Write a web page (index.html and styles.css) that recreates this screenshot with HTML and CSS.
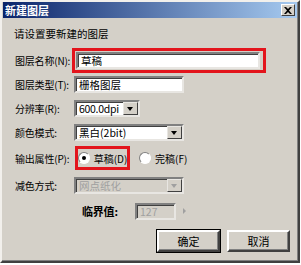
FILE: index.html
```html
<!DOCTYPE html>
<html lang="zh">
<head>
  <meta charset="UTF-8">
  <title>新建图层</title>
  <link rel="stylesheet" href="styles.css">
</head>
<body>
  <div class="window">
    <div class="titlebar">
      <span class="title">新建图层</span>
      <span class="close">
        <svg width="8" height="7" viewBox="0 0 8 7"><path d="M0 0h2l2 2 2-2h2L5 3.5 8 7H6L4 5 2 7H0l3-3.5z" fill="#000"/></svg>
      </span>
    </div>
    <div class="content">
      <p class="intro">请设置要新建的图层</p>
      <div class="form">
        <label class="lbl">图层名称(N):</label>
        <div class="ctl">
          <div class="mark mark-name"><div class="field w-name">草稿</div></div>
        </div>

        <label class="lbl">图层类型(T):</label>
        <div class="ctl"><div class="field w-type">栅格图层</div></div>

        <label class="lbl">分辨率(R):</label>
        <div class="ctl">
          <div class="field combo w-res"><span>600.0dpi</span><span class="drop"></span></div>
        </div>

        <label class="lbl">颜色模式:</label>
        <div class="ctl">
          <div class="field combo w-mode"><span>黑白(2bit)</span><span class="drop"></span></div>
        </div>

        <label class="lbl">输出属性(P):</label>
        <div class="ctl radios">
          <div class="mark mark-radio">
            <span class="radio on"></span><span>草稿(D)</span>
          </div>
          <div class="opt">
            <span class="radio"></span><span>完稿(F)</span>
          </div>
        </div>

        <label class="lbl">减色方式:</label>
        <div class="ctl">
          <div class="field combo disabled w-mode"><span>网点纸化</span><span class="drop"></span></div>
        </div>

        <div class="threshold">
          <span class="lbl">临界值:</span>
          <div class="field disabled w-thr">127</div>
          <span class="arrow"></span>
        </div>
      </div>
      <div class="buttons">
        <button class="btn default">确定</button>
        <button class="btn">取消</button>
      </div>
    </div>
  </div>
</body>
</html>
```

FILE: styles.css
```css
body {
  margin: 0;
  font-family: "Noto Sans CJK SC", "DejaVu Sans", sans-serif;
  font-size: 11px;
  color: #000;
  background: #fff;
}
.window {
  width: 300px;
  height: 263px;
  box-sizing: border-box;
  background: #d4d0c8;
  border: 2px solid;
  border-color: #f2f0ec #404040 #404040 #f2f0ec;
  box-shadow: inset -1px -1px 0 #808080;
  overflow: hidden;
}
.titlebar {
  height: 16px;
  margin: 0 1px;
  display: flex;
  align-items: center;
  justify-content: space-between;
  padding: 0 2px 0 2px;
  background: linear-gradient(to right, #0a246a, #a6caf0);
}
.title {
  color: #fff;
  font-weight: bold;
  font-size: 11px;
}
.close {
  width: 14px;
  height: 12px;
  box-sizing: border-box;
  background: #d4d0c8;
  border: 1px solid;
  border-color: #fff #404040 #404040 #fff;
  display: flex;
  align-items: center;
  justify-content: center;
}
.content {
  padding: 0 0 0 12px;
}
.intro {
  margin: 6px 0 0;
  height: 20px;
  line-height: 20px;
  font-size: 10.5px;
}
.form {
  display: grid;
  grid-template-columns: 60px auto;
  grid-template-rows: 24px 24px 25px 23px 28px 26px 26px;
  align-items: center;
  margin-top: 4px;
}
.lbl {
  padding-left: 1px;
  white-space: nowrap;
  font-size: 10px;
  letter-spacing: -0.2px;
}
.ctl {
  display: flex;
  align-items: center;
}
.field {
  height: 17px;
  box-sizing: border-box;
  background: #fff;
  border: 2px solid;
  border-color: #808080 #e8e6e2 #e8e6e2 #808080;
  box-shadow: inset 1px 1px 0 #404040;
  padding: 0 3px;
  line-height: 13px;
  font-size: 10.5px;
  display: flex;
  align-items: center;
  justify-content: space-between;
}
.combo {
  padding-right: 0;
}
.w-res span:first-child {
  letter-spacing: -0.3px;
}
.drop {
  flex: none;
  width: 15px;
  height: 13px;
  box-sizing: border-box;
  background: #d4d0c8;
  border: 1px solid;
  border-color: #e8e6e2 #404040 #404040 #e8e6e2;
  position: relative;
}
.drop::after {
  content: "";
  position: absolute;
  left: 3px;
  top: 4px;
  border-left: 3.5px solid transparent;
  border-right: 3.5px solid transparent;
  border-top: 4px solid #000;
}
.disabled {
  background: #d4d0c8;
  color: #a0a0a0;
}
.disabled .drop::after {
  border-top-color: #a0a0a0;
}
.w-name { width: 184px; }
.w-type { width: 110px; }
.w-res { width: 66px; }
.w-mode { width: 110px; }
.w-thr { width: 41px; }
.mark {
  border: 3px solid #e3141c;
  margin-left: -2px;
  padding: 1px 3px 1px 1px;
}
.radios {
  gap: 9px;
  font-size: 10px;
}
.mark-radio {
  margin-left: 1px;
  width: 49px;
  height: 18px;
  box-sizing: content-box;
  display: flex;
  align-items: center;
  gap: 4px;
  padding: 0;
  justify-content: center;
  white-space: nowrap;
}
.opt {
  display: flex;
  align-items: center;
  gap: 4px;
}
.radio {
  flex: none;
  width: 12px;
  height: 12px;
  box-sizing: border-box;
  border-radius: 50%;
  background: #fff;
  border: 1px solid;
  border-color: #808080 #fff #fff #808080;
  position: relative;
}
.radio.on::after {
  content: "";
  position: absolute;
  left: 3px;
  top: 3px;
  width: 4px;
  height: 4px;
  border-radius: 50%;
  background: #000;
}
.threshold {
  grid-column: 1 / 3;
  display: flex;
  align-items: center;
  padding-left: 68px;
}
.threshold .lbl {
  padding: 0;
  width: 53px;
  font-size: 11px;
  font-weight: bold;
}
.arrow {
  margin-left: 7px;
  border-top: 3px solid transparent;
  border-bottom: 3px solid transparent;
  border-left: 3px solid #a0a0a0;
}
.buttons {
  display: flex;
  justify-content: flex-end;
  gap: 7px;
  margin-top: 6px;
  padding-right: 8px;
}
.btn {
  width: 63px;
  height: 22px;
  background: #d4d0c8;
  font-family: inherit;
  font-size: 11px;
  border: 2px solid;
  border-color: #fff #404040 #404040 #fff;
  box-shadow: inset -1px -1px 0 #808080;
  padding: 0;
}
.btn.default {
  outline: 1px solid #000;
}
```
